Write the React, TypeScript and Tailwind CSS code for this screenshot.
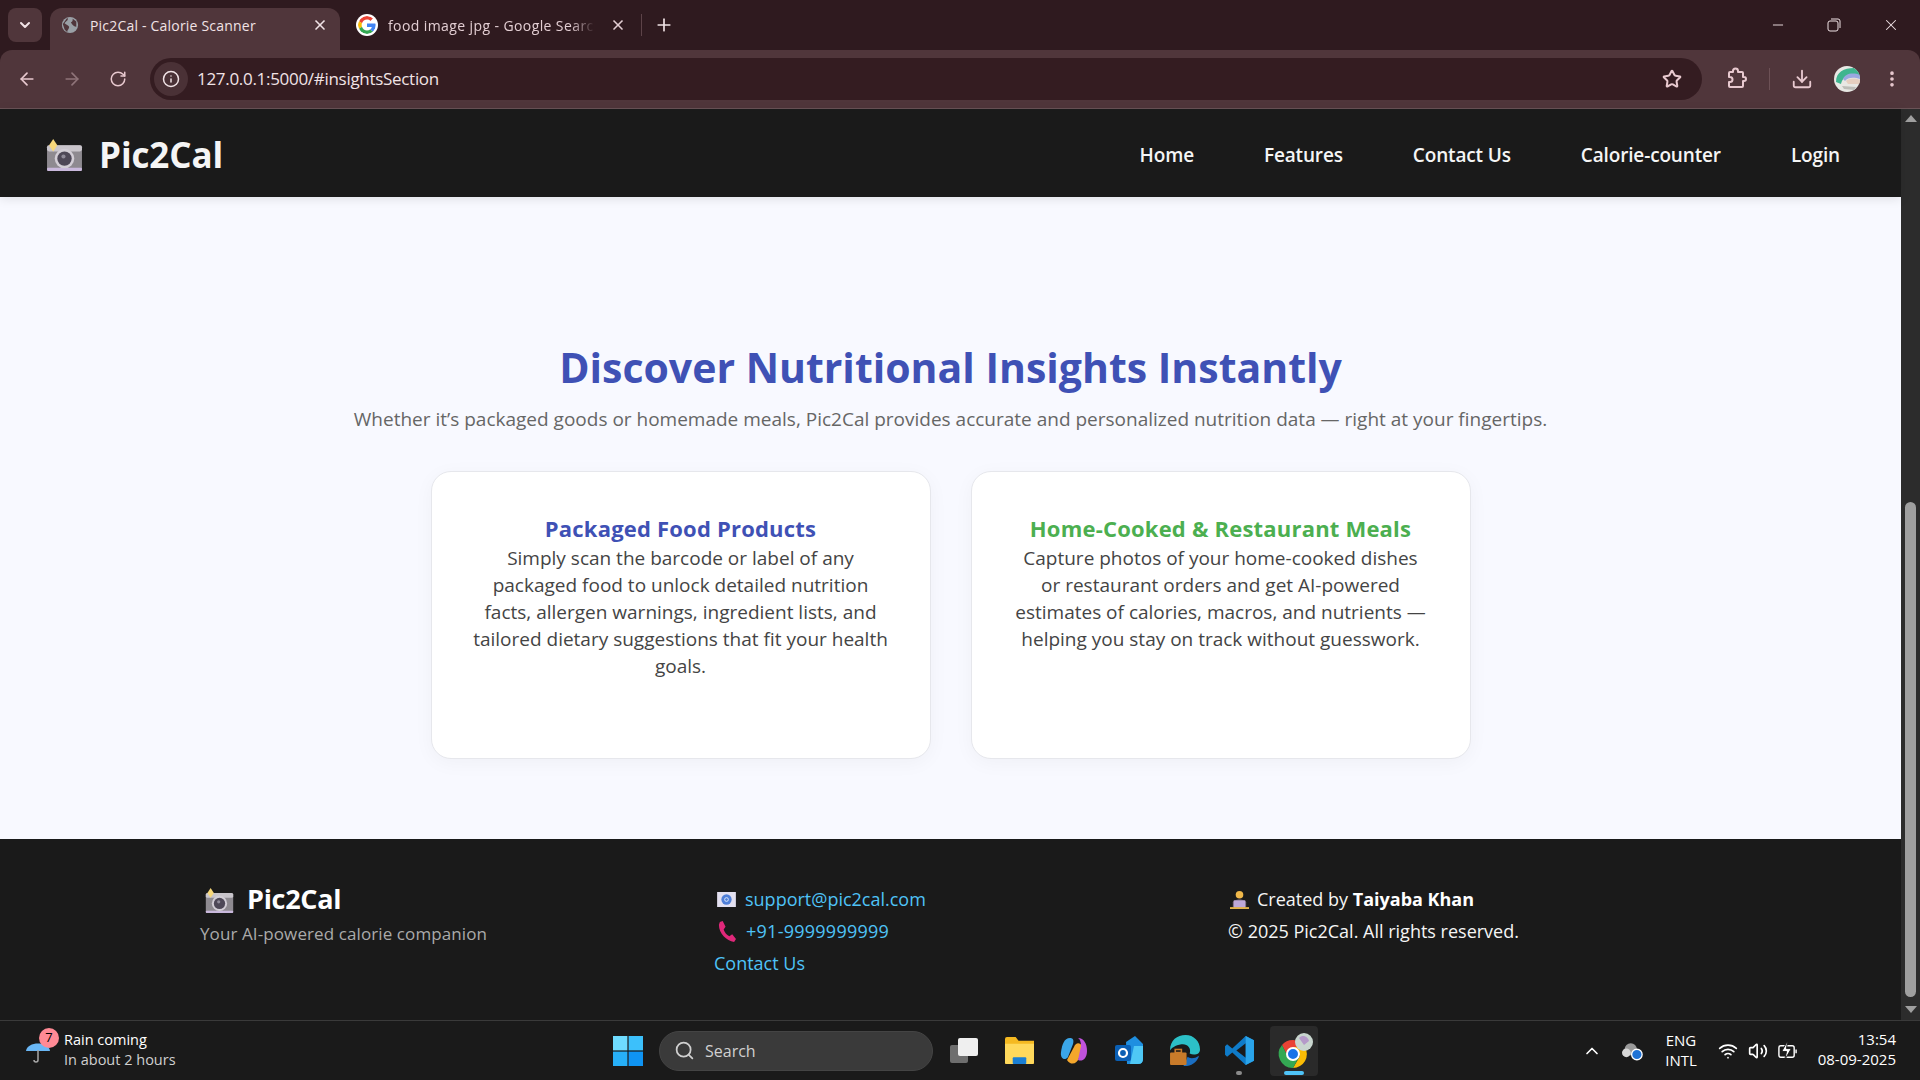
import { ArrowLeft, ArrowRight, ChevronDown, ChevronUp, Download, EllipsisVertical, Info, Minus, Plus, RotateCw, Search, Star, Volume2, Wifi, X } from 'lucide-react';

const font = 'font-["Open_Sans",sans-serif]';

const CameraIcon = ({ className }: { className: string }) => (
	<svg viewBox="0 0 36 32" className={className}>
		<rect x="1" y="6" width="34" height="25" rx="2" fill="#8e8a90" />
		<rect x="1" y="6" width="34" height="6" rx="2" fill="#c9c5cb" />
		<rect x="1" y="28" width="34" height="3" rx="1" fill="#c9b8dc" />
		<circle cx="18" cy="19" r="9.5" fill="#d3ced6" />
		<circle cx="18" cy="19" r="7" fill="#4e4857" />
		<circle cx="17" cy="17" r="2" fill="#8f8a98" />
		<path d="M7 0 L11 6 L7 12 L3 6 Z" fill="#f6d77a" />
	</svg>
);

const GoogleIcon = () => (
	<svg viewBox="0 0 48 48" className="w-[22px] h-[22px] rounded-full bg-white p-[2px] shrink-0">
		<path fill="#EA4335" d="M24 9.500c3.500 0 6.700 1.200 9.200 3.600l6.900-6.900C35.900 2.400 30.500 0 24 0 14.600 0 6.500 5.400 2.600 13.200l8 6.200C12.500 13.700 17.800 9.500 24 9.500z" />
		<path fill="#4285F4" d="M47 24.500c0-1.600-.1-3.100-.4-4.500H24v9h12.900c-.6 3-2.200 5.500-4.700 7.200l7.700 6C44.400 37.900 47 31.800 47 24.500z" />
		<path fill="#FBBC05" d="M10.500 28.600c-.5-1.400-.8-3-.8-4.600s.3-3.200.8-4.600l-8-6.200C.9 16.500 0 20.100 0 24s.9 7.500 2.600 10.800l7.900-6.200z" />
		<path fill="#34A853" d="M24 48c6.500 0 11.900-2.100 15.900-5.800l-7.700-6c-2.200 1.400-4.900 2.300-8.200 2.300-6.200 0-11.500-4.200-13.400-9.900l-8 6.200C6.500 42.600 14.600 48 24 48z" />
	</svg>
);

const GlobeIcon = () => (
	<svg viewBox="0 0 20 20" className="w-[18px] h-[18px] shrink-0">
		<circle cx="10" cy="10" r="9" fill="#9aa0a6" />
		<path d="M7 2 C9 5 5 6 4 8 C6 10 8 10 9 12 C9 15 7 15 7 18 L4 15 L2 9 Z M13 3 L17 6 L17 12 C15 12 12 10 11 7 C13 6 13 5 13 3 Z" fill="#50363b" />
	</svg>
);

const Avatar = () => (
	<svg viewBox="0 0 26 26" className="w-[26px] h-[26px] ml-[21px]">
		<clipPath id="av"><circle cx="13" cy="13" r="13" /></clipPath>
		<g clipPath="url(#av)">
			<rect width="26" height="26" fill="#e8e8e4" />
			<path d="M2 16 C2 6 10 2 20 2 L26 6 L26 10 C16 8 9 9 7 18 Z" fill="#3fb58f" />
			<path d="M9 13 C11 8 18 6 26 9 L26 13 C20 11 14 11 11 15 Z" fill="#9aa8e0" />
			<path d="M12 15 C15 12 21 12 26 14 L26 18 L14 18 Z" fill="#e6cfc0" />
			<path d="M8 20 L22 21 L20 24 L10 23 Z" fill="#bdbdb8" />
		</g>
	</svg>
);

const MaximizeIcon = () => (
	<svg viewBox="0 0 14 14" className="w-[14px] h-[14px]" fill="none" stroke="#f1e3e6" strokeWidth="1">
		<rect x="1" y="3" width="10" height="10" rx="2" />
		<path d="M4 1 H11 Q13 1 13 3 V10" />
	</svg>
);

const ExtensionIcon = () => (
	<svg viewBox="0 0 24 24" className="w-[24px] h-[24px] ml-[22px]" fill="none" stroke="currentColor" strokeWidth="2" strokeLinejoin="round">
		<path d="M9 5 V4 a2.500 2.500 0 0 1 5 0 V5 H18 a1 1 0 0 1 1 1 V10 h1 a2 2 0 0 1 0 4 h-1 V19 a1 1 0 0 1-1 1 H6 a1 1 0 0 1-1-1 V15 h1 a2.500 2.500 0 0 0 0-5 H5 V6 a1 1 0 0 1 1-1 Z" />
	</svg>
);

const TabBar = () => (
	<div className="flex h-[50px] bg-[#2f1a1f] pt-[8px] pl-[8px] shrink-0">
		<div className="w-[34px] h-[34px] rounded-lg bg-[#50363b] flex items-center justify-center text-[#f1e3e6]">
			<ChevronDown size={16} strokeWidth={3} />
		</div>
		<div className="w-[290px] ml-[8px] rounded-t-xl bg-[#50363b] flex items-center pl-[11px] pr-[12px] pb-[8px] text-[#f1e3e6]">
			<GlobeIcon />
			<span className="ml-[11px] text-[14px] tracking-[0.2px] flex-1 whitespace-nowrap">Pic2Cal - Calorie Scanner</span>
			<X size={16} strokeWidth={2.5} />
		</div>
		<div className="flex items-center pl-[16px] pb-[8px] text-[#e3ced3]">
			<GoogleIcon />
			<span className="ml-[10px] w-[207px] overflow-hidden text-[14px] tracking-[0.4px] whitespace-nowrap [mask-image:linear-gradient(to_right,black_88%,transparent)]">food image jpg - Google Search</span>
			<X size={16} strokeWidth={2.5} className="ml-[15px] shrink-0" />
			<div className="w-px h-[22px] bg-[#5d4348] ml-[15px]" />
			<Plus size={20} strokeWidth={2} className="ml-[12px] text-[#f1e3e6] shrink-0" />
		</div>
		<div className="flex-1" />
		<div className="flex items-center h-[34px] text-[#f1e3e6]">
			<Minus size={16} strokeWidth={1.4} className="mr-[41px]" />
			<MaximizeIcon />
			<X size={18} strokeWidth={1.4} className="ml-[41px] mr-[20px]" />
		</div>
	</div>
);

const ToolBar = () => (
	<div className="flex items-center h-[59px] bg-[#50363b] rounded-t-xl border-b border-[#6a5357] pl-[17px] shrink-0 text-[#e8c9cf]">
		<ArrowLeft size={20} />
		<ArrowRight size={20} className="ml-[25px] text-[#8f7479]" />
		<RotateCw size={18} className="ml-[27px]" />
		<div className="flex items-center h-[42px] w-[1552px] ml-[23px] rounded-full bg-[#341c21] pl-[4px] pr-[20px] shrink-0">
			<div className="w-[34px] h-[34px] rounded-full bg-[#4a3136] flex items-center justify-center text-[#f1e3e6]">
				<Info size={18} />
			</div>
			<span className="ml-[9px] text-[17px] tracking-[-0.3px] text-[#f1e3e6] flex-1">127.0.0.1:5000/#insightsSection</span>
			<Star size={20} strokeWidth={2.4} />
		</div>
		<ExtensionIcon />
		<div className="w-px h-[22px] bg-[#6d5156] ml-[21px]" />
		<Download size={22} className="ml-[21px]" />
		<Avatar />
		<EllipsisVertical size={20} className="ml-[22px]" strokeWidth={2.4} />
	</div>
);

const NavBar = () => {
	const links = ['Home', 'Features', 'Contact Us', 'Calorie-counter', 'Login'];
	return (
		<nav className="flex items-center justify-between h-[88px] bg-[#1a1a1a] pl-[46px] pr-[61px] pt-[5px] shrink-0 shadow-[0_2px_10px_rgba(0,0,0,0.1)] relative">
			<div className="flex items-center">
				<CameraIcon className="w-[37px] h-[33px]" />
				<span className="ml-[16px] text-[35px] tracking-[-0.1px] font-bold text-[#f5f5f5]">Pic2Cal</span>
			</div>
			<ul className="flex gap-[70px]">
				{links.map((link) => (
					<li key={link} className="text-[19px] font-semibold tracking-[-0.15px] text-[#f5f5f5]">{link}</li>
				))}
			</ul>
		</nav>
	);
};

const cards = [
	{
		title: 'Packaged Food Products',
		color: 'text-[#3f51b5]',
		lines: [
			'Simply scan the barcode or label of any',
			'packaged food to unlock detailed nutrition',
			'facts, allergen warnings, ingredient lists, and',
			'tailored dietary suggestions that fit your health',
			'goals.',
		],
	},
	{
		title: 'Home-Cooked & Restaurant Meals',
		color: 'text-[#4caf50]',
		lines: [
			'Capture photos of your home-cooked dishes',
			'or restaurant orders and get AI-powered',
			'estimates of calories, macros, and nutrients —',
			'helping you stay on track without guesswork.',
		],
	},
];

const Insights = () => (
	<section className="flex flex-col items-center flex-1 bg-[#f8f9ff]">
		<h2 className="mt-[140px] text-[41px] leading-[60px] font-bold text-[#3f51b5]">Discover Nutritional Insights Instantly</h2>
		<p className="mt-[9px] text-[19px] leading-[26px] text-[#666]">Whether it’s packaged goods or homemade meals, Pic2Cal provides accurate and personalized nutrition data — right at your fingertips.</p>
		<div className="flex gap-[40px] mt-[39px]">
			{cards.map((card) => (
				<div key={card.title} className="w-[500px] h-[288px] bg-white rounded-[20px] border border-[#e6e7ec] shadow-[0_4px_20px_rgba(0,0,0,0.04)] px-[30px] pt-[41px] text-center">
					<h3 className={`text-[22px] leading-[30px] font-bold tracking-[0.2px] ${card.color}`}>{card.title}</h3>
					<p className="mt-[2px] text-[19px] leading-[27px] text-[#444]">
						{card.lines.map((line) => (
							<span key={line} className="block whitespace-nowrap">{line}</span>
						))}
					</p>
				</div>
			))}
		</div>
	</section>
);

const Footer = () => (
	<footer className="flex h-[181px] bg-[#1a1a1a] pl-[200px] pt-[44px] shrink-0 text-[#f5f5f5]">
		<div className="w-[514px]">
			<div className="flex items-center h-[32px] pl-[5px]">
				<CameraIcon className="w-[29px] h-[26px] mt-[3px]" />
				<span className="ml-[13px] text-[27px] font-bold tracking-[-0.3px] text-white">Pic2Cal</span>
			</div>
			<p className="mt-[7px] text-[17px] leading-[24px] tracking-[0.1px] text-[#aaa]">Your AI-powered calorie companion</p>
		</div>
		<div className="w-[514px] text-[18px] text-[#4fc3f7]">
			<div className="flex items-center h-[32px] pl-[3px]">
				<svg viewBox="0 0 20 16" className="w-[19px] h-[15px]">
					<rect width="20" height="16" fill="#e3e0f0" />
					<circle cx="10" cy="8" r="5.500" fill="#4f7fd8" />
					<circle cx="10" cy="8" r="2" fill="none" stroke="#dfe8fa" strokeWidth="1" />
				</svg>
				<span className="ml-[9px]">support@pic2cal.com</span>
			</div>
			<div className="flex items-center h-[32px] pl-[3px]">
				<svg viewBox="0 0 20 22" className="w-[19px] h-[21px]">
					<path d="M3 1 L6 0 L9 6 L7 9 C8 12 10 15 13 16 L16 14 L20 19 L18 22 C10 21 2 13 2 4 Z" fill="#e0287a" />
				</svg>
				<span className="ml-[10px] tracking-[0.25px]">+91-9999999999</span>
			</div>
			<div className="h-[32px] leading-[32px]">Contact Us</div>
		</div>
		<div className="text-[18px]">
			<div className="flex items-center h-[32px] pl-[2px]">
				<svg viewBox="0 0 20 20" className="w-[19px] h-[19px]">
					<circle cx="10" cy="5" r="4" fill="#f0b84a" />
					<path d="M3 13 C3 9 17 9 17 13 L17 18 L3 18 Z" fill="#7a6a80" />
					<rect x="4" y="11" width="12" height="8" fill="#bda8d8" />
					<rect x="0" y="18" width="20" height="2" fill="#e2b24a" />
				</svg>
				<span className="ml-[8px]">Created by <b className="font-bold text-white">Taiyaba Khan</b></span>
			</div>
			<div className="h-[32px] leading-[32px]">© 2025 Pic2Cal. All rights reserved.</div>
		</div>
	</footer>
);

const ScrollBar = () => (
	<div className="flex flex-col items-center w-[19px] bg-[#2c2c2c] shrink-0">
		<div className="w-0 h-0 mt-[6px] border-x-[6px] border-x-transparent border-b-[7px] border-b-[#9f9f9f]" />
		<div className="w-[11px] h-[495px] mt-[380px] rounded-full bg-[#9f9f9f]" />
		<div className="w-0 h-0 mt-[9px] border-x-[6px] border-x-transparent border-t-[7px] border-t-[#9f9f9f]" />
	</div>
);

const TaskIcon = ({ children, active }: { children: React.ReactNode; active?: boolean }) => (
	<div className={`relative w-[48px] h-[50px] mr-[7px] flex items-center justify-center rounded ${active ? 'bg-[#2a2a2a]' : ''}`}>
		{children}
		{active && <div className="absolute bottom-[1px] w-[20px] h-[4px] rounded-full bg-[#4fc3f7]" />}
	</div>
);

const TaskBar = () => (
	<div className="flex items-center h-[60px] bg-[#1a1a1a] border-t border-[#3a3a3a] shrink-0 text-white">
		<div className="relative flex items-center w-[613px] pl-[64px]">
			<svg viewBox="0 0 24 22" className="absolute left-[26px] top-[11px] w-[24px] h-[22px]">
				<path d="M0 10 C1 0 23 0 24 10 Z" fill="#6ab7f5" />
				<path d="M12 9 V19 Q12 21 10 21 Q8 21 8 19" fill="none" stroke="#a8a8a8" strokeWidth="1.500" />
			</svg>
			<div className="absolute left-[39px] top-[-2px] w-[20px] h-[20px] rounded-full bg-[#ff8a95] flex items-center justify-center text-[13px] text-black">7</div>
			<div className="text-[14.5px] leading-[20px] mb-[2px]">
				<div>Rain coming</div>
				<div className="text-[#d0d0d0]">In about 2 hours</div>
			</div>
		</div>
		<svg viewBox="0 0 30 30" className="w-[30px] h-[30px]">
			<rect width="14.400" height="14.400" fill="#6fdcff" />
			<rect x="15.600" width="14.400" height="14.400" fill="#3cc0fb" />
			<rect y="15.600" width="14.400" height="14.400" fill="#27b0f8" />
			<rect x="15.600" y="15.600" width="14.400" height="14.400" fill="#0f94f3" />
		</svg>
		<div className="flex items-center w-[274px] h-[40px] ml-[16px] pl-[14px] rounded-full bg-[#3a3a3a] border border-[#444] text-[#d0d0d0]">
			<Search size={21} />
			<span className="ml-[10px] text-[16px]">Search</span>
		</div>
		<div className="flex items-center ml-[7px]">
			<TaskIcon>
				<svg viewBox="0 0 30 30" className="w-[30px] h-[30px]">
					<rect x="1" y="9" width="18" height="18" rx="2" fill="#6e6e6e" />
					<rect x="9" y="2" width="20" height="18" rx="2" fill="#efefef" />
				</svg>
			</TaskIcon>
			<TaskIcon>
				<svg viewBox="0 0 32 30" className="w-[31px] h-[29px]">
					<path d="M1 3 Q1 1 3 1 H12 L15 5 H31 V28 Q31 29 29 29 H3 Q1 29 1 28 Z" fill="#f5b921" />
					<path d="M1 8 H31 V28 Q31 29 29 29 H3 Q1 29 1 28 Z" fill="#ffd95c" />
					<rect x="9" y="22" width="14" height="7" rx="1" fill="#1a7fd4" />
				</svg>
			</TaskIcon>
			<TaskIcon>
				<svg viewBox="0 0 30 30" className="w-[30px] h-[30px]">
					<path d="M11 2 C5 2 3 9 2 16 C1 23 6 25 9 21 L14 8 C15 4 14 2 11 2 Z" fill="#3ba6e8" />
					<path d="M8 24 C12 30 18 28 20 22 L24 11 C21 6 17 6 15 11 Z" fill="#f4a72c" />
					<path d="M19 2 C25 2 28 8 28 15 C28 23 23 26 19 24 L22 10 C22 6 21 3 19 2 Z" fill="#c052dc" />
				</svg>
			</TaskIcon>
			<TaskIcon>
				<svg viewBox="0 0 30 30" className="w-[30px] h-[30px]">
					<path d="M12 6 L21 0 L29 8 V23 Q29 28 24 28 H13 Z" fill="#1f8fe0" />
					<path d="M20 10 H29 V23 Q29 28 24 28 H16 Z" fill="#4fc8f5" />
					<rect x="1" y="9" width="16" height="16" rx="2" fill="#0a5fb4" />
					<circle cx="9" cy="17" r="4" fill="none" stroke="white" strokeWidth="2.200" />
				</svg>
			</TaskIcon>
			<TaskIcon>
				<svg viewBox="0 0 30 30" className="w-[31px] h-[31px]">
					<path d="M1 15 C1 5 8 0 16 0 C24 0 30 6 30 14 C30 19 24 20 20 18 C22 12 17 8 12 9 C6 10 2 13 1 15 Z" fill="#2cc0c7" />
					<path d="M14 30 C22 31 28 25 29 20 C25 23 20 23 18 21 L16 26 Z" fill="#1b6fc2" />
					<rect x="1" y="17" width="16" height="12" rx="1" fill="#c97b2a" />
					<rect x="6" y="14" width="6" height="3" fill="none" stroke="#c97b2a" strokeWidth="1.500" />
				</svg>
			</TaskIcon>
			<TaskIcon>
				<svg viewBox="0 0 30 30" className="w-[31px] h-[31px]">
					<path d="M21 1 L29 5 V25 L21 29 L8 17 L3 21 L1 19 V11 L3 9 L8 13 Z" fill="#0f7bc8" />
					<path d="M21 8 L12 15 L21 22 Z" fill="#1a1a1a" />
					<path d="M21 1 L29 5 V25 L21 29 Z" fill="#2aa4ea" />
				</svg>
				<div className="absolute bottom-[1px] w-[6px] h-[4px] rounded-full bg-[#8a8a8a]" />
			</TaskIcon>
			<TaskIcon active>
				<svg viewBox="0 0 40 40" className="w-[40px] h-[40px]">
					<path d="M19 9 A14 14 0 0 1 31 16 L19 16 L13 24 L8 14 A14 14 0 0 1 19 9 Z" fill="#ea4335" />
					<path d="M31 16 A14 14 0 0 1 19 37 L26 25 L19 16 Z" fill="#fbbc05" />
					<path d="M8 14 A14 14 0 0 0 19 37 L25 26 L13 24 Z" fill="#34a853" />
					<circle cx="19" cy="23" r="6" fill="#1a73e8" stroke="white" strokeWidth="2" />
					<circle cx="30" cy="11" r="9" fill="#c9d6cf" />
					<path d="M25 7 C29 3 34 6 35 10 L30 14 Z" fill="#b59ac9" />
				</svg>
			</TaskIcon>
		</div>
		<div className="flex-1" />
		<ChevronUp size={20} className="mr-[20px]" />
		<svg viewBox="0 0 24 22" className="w-[21px] h-[20px] mr-[17px]">
			<circle cx="10" cy="9" r="7" fill="#9a9a9a" />
			<circle cx="5" cy="13" r="5" fill="#d8d8d8" />
			<circle cx="17" cy="15" r="6" fill="#1f73d6" stroke="white" strokeWidth="1.500" />
		</svg>
		<div className="w-[42px] text-center text-[15px] leading-[20px] mb-[2px]">
			<div>ENG</div>
			<div>INTL</div>
		</div>
		<Wifi size={20} className="ml-[16px]" />
		<Volume2 size={20} className="ml-[10px]" />
		<svg viewBox="0 0 22 22" className="w-[21px] h-[21px] ml-[9px]" fill="none" stroke="white" strokeWidth="1.500">
			<rect x="2" y="6" width="16" height="12" rx="2" />
			<path d="M20 10 V14" />
			<path d="M11 1 L5 12 H10 L8 21 L15 9 H10 Z" fill="white" stroke="#1a1a1a" strokeWidth="1" />
		</svg>
		<div className="w-[90px] mr-[24px] ml-[8px] mb-[4px] text-right text-[15px] leading-[20px]">
			<div>13:54</div>
			<div>08-09-2025</div>
		</div>
	</div>
);

export default function App() {
	return (
		<div className={`flex flex-col w-[1920px] h-[1080px] overflow-hidden bg-[#2f1a1f] ${font}`}>
			<TabBar />
			<ToolBar />
			<div className="flex flex-1 min-h-0">
				<main className="flex flex-col flex-1 min-w-0">
					<NavBar />
					<Insights />
					<Footer />
				</main>
				<ScrollBar />
			</div>
			<TaskBar />
		</div>
	);
}
